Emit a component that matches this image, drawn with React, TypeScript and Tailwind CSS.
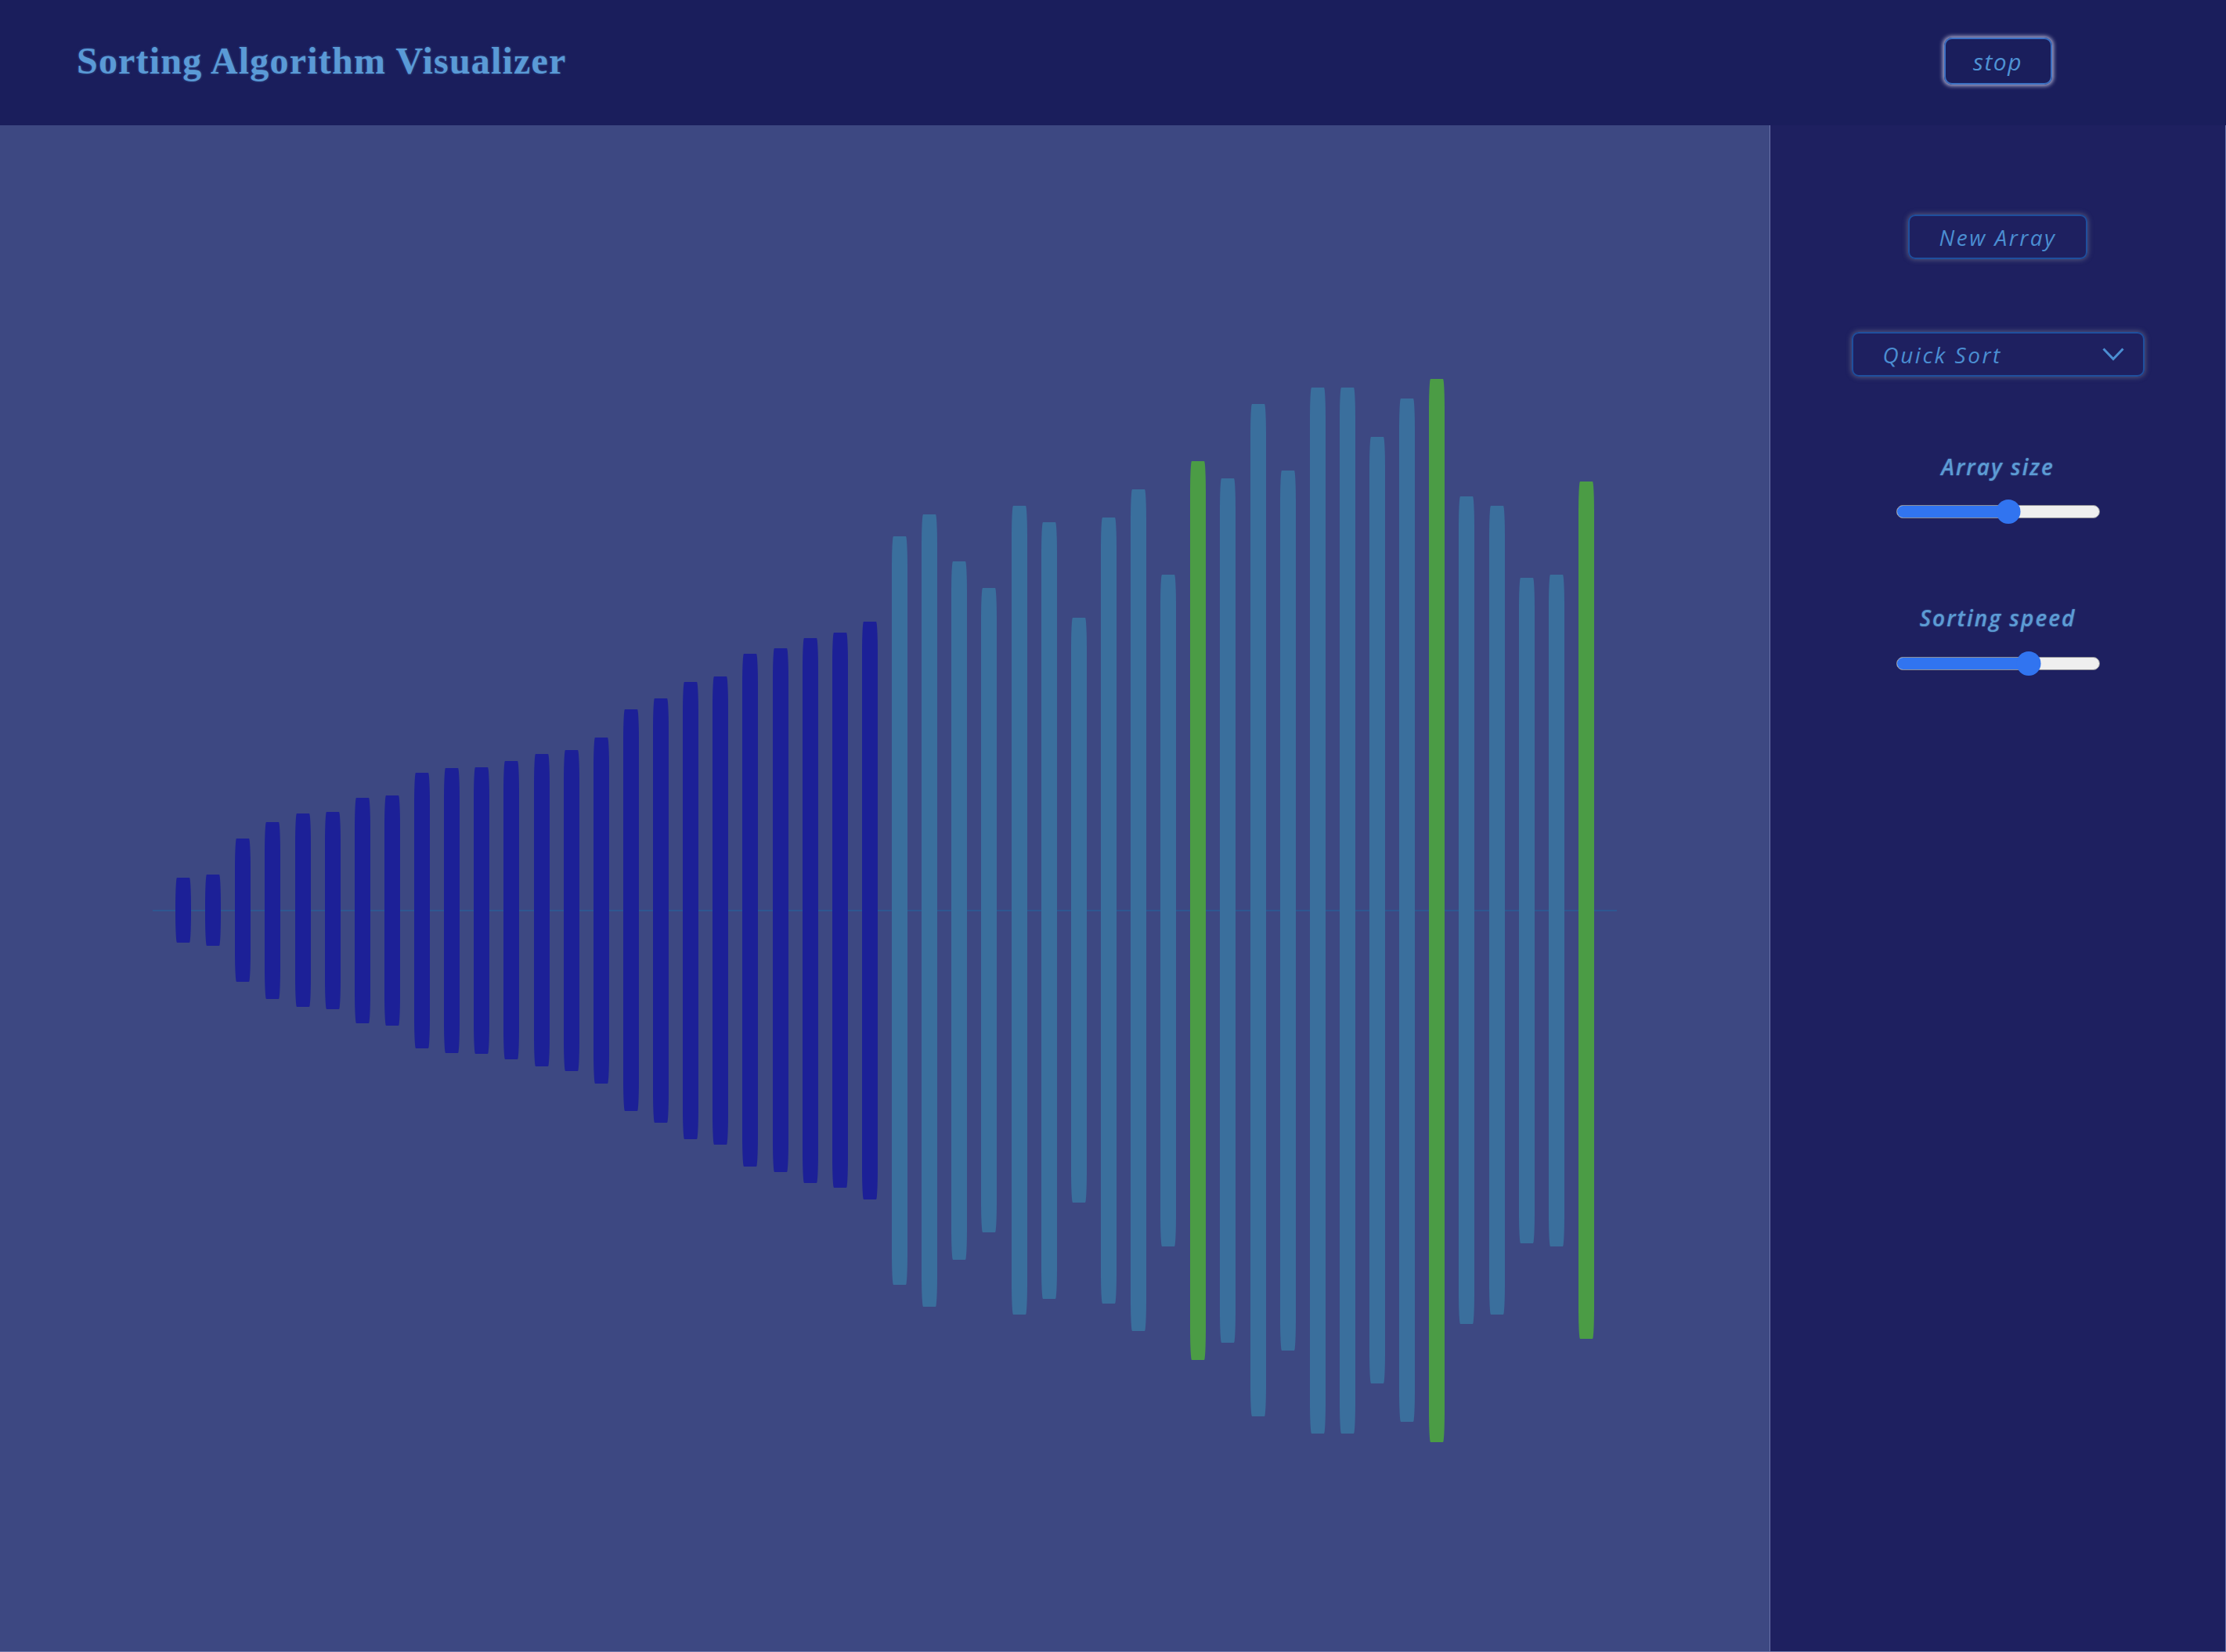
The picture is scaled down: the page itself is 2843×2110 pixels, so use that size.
import React from 'react'

type Kind = 'sorted' | 'idle' | 'pivot'

// heights in px, left to right
const heights = [
  83, 91, 183, 226, 247, 252, 288, 294, 352, 364, 366, 381, 399, 410, 442, 513,
  542, 584, 598, 655, 669, 696, 709, 738, 956, 1012, 892, 823, 1033, 992, 747, 1004,
  1075, 858, 1148, 1104, 1293, 1124, 1336, 1336, 1209, 1307, 1358, 1057, 1033, 850, 858, 1095,
]
const pivots = [34, 42, 47]

const kindOf = (i: number): Kind => (pivots.includes(i) ? 'pivot' : i < 24 ? 'sorted' : 'idle')

const barColor: Record<Kind, string> = {
  sorted: 'bg-[#1c2097]',
  idle: 'bg-[#3a6f9d]',
  pivot: 'bg-[#4b9c45]',
}

function Slider({ value }: { value: number }) {
  // value is 0..1, thumb travels inside the track
  const left = 15 + value * 230
  return (
    <div className="relative h-[31px] w-[260px]">
      <div className="absolute left-0 right-0 top-[7px] h-[17px] overflow-hidden rounded-full border border-[#8d8d95] bg-[#efefef]">
        <div className="h-full bg-[#3174f0]" style={{ width: left }} />
      </div>
      <div
        className="absolute top-0 h-[31px] w-[31px] -translate-x-1/2 rounded-full bg-[#3174f0]"
        style={{ left }}
      />
    </div>
  )
}

export default function App() {
  return (
    <div className="flex h-[2110px] w-full flex-col bg-[#3d4882] font-['Open_Sans',sans-serif]">
      <header className="flex h-[160px] shrink-0 bg-[#1a1e5c] pb-[4px]">
        <div className="flex flex-1 items-center pl-[98px]">
          <h1 className="font-['Liberation_Serif',serif] text-[48px] font-bold tracking-[1.2px] text-[#5a9ad6] [text-shadow:0_0_3px_rgba(90,154,214,0.5)]">
            Sorting Algorithm Visualizer
          </h1>
        </div>
        <div className="flex w-[583px] items-center justify-center">
          <button className="flex h-[60px] w-[138px] items-center justify-center rounded-[10px] border-2 border-[#3b6fc2] text-[30px] font-medium italic tracking-[1.5px] text-[#4f93d4] shadow-[0_0_5px_2px_rgba(215,215,240,0.75)]">
            stop
          </button>
        </div>
      </header>

      <div className="flex flex-1 border-b border-[#7078ac]">
        <main className="flex flex-1 items-center justify-center pt-[56px]">
          <div className="relative flex w-[1870px] items-center justify-between px-[29px]">
            <div className="absolute left-0 right-0 top-1/2 h-[2px] -translate-y-1/2 bg-[#2e5791]" />
            {heights.map((h, i) => (
              <div
                key={i}
                className={`relative w-[20px] rounded-[2px/40px] ${barColor[kindOf(i)]}`}
                style={{ height: h }}
              />
            ))}
          </div>
        </main>

        <aside className="flex w-[583px] flex-col items-center border-l border-r border-[#6c74aa] bg-[#1e2060] pt-[114px]">
          <button className="flex h-[57px] w-[229px] items-center justify-center rounded-[9px] border-2 border-[#1f4f9e] text-[28px] italic tracking-[2.5px] text-[#4b8ed2] shadow-[0_0_6px_1px_rgba(130,135,150,0.55)]">
            New Array
          </button>

          <div className="mt-[93px] flex h-[57px] w-[374px] items-center justify-between rounded-[9px] border-2 border-[#1f4f9e] pl-[38px] pr-[24px] shadow-[0_0_6px_1px_rgba(130,135,150,0.55)]">
            <span className="text-[28px] italic tracking-[2.5px] text-[#4b8ed2]">Quick Sort</span>
            <svg width="28" height="17" viewBox="0 0 28 17" fill="none">
              <polyline points="1.5,1.5 14,14.5 26.5,1.5" stroke="#4b8ed2" strokeWidth="3" />
            </svg>
          </div>

          <div className="mt-[96px] text-[28px] font-semibold italic leading-[38px] tracking-[2px] text-[#5c9bd4] [text-shadow:0_0_2px_rgba(92,155,212,0.6)]">
            Array size
          </div>
          <div className="mt-[23px]">
            <Slider value={0.56} />
          </div>

          <div className="mt-[101px] text-[28px] font-semibold italic leading-[38px] tracking-[2px] text-[#5c9bd4] [text-shadow:0_0_2px_rgba(92,155,212,0.6)]">
            Sorting speed
          </div>
          <div className="mt-[24px]">
            <Slider value={0.67} />
          </div>
        </aside>
      </div>
    </div>
  )
}
